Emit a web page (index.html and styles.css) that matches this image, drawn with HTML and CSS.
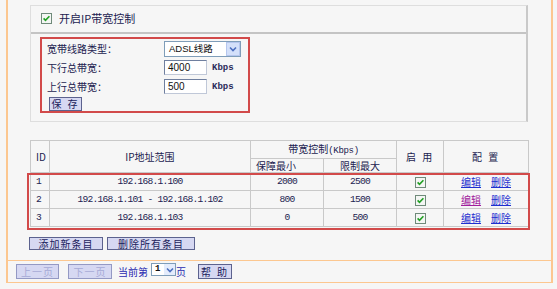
FILE: index.html
```html
<!DOCTYPE html>
<html>
<head>
<meta charset="utf-8">
<title>IP带宽控制</title>
<link rel="stylesheet" href="styles.css">
</head>
<body>
<div class="frame">
  <div class="main">
    <section class="panel">
      <div class="panel-head">
        <span class="cb"><svg width="11" height="11" viewBox="0 0 11 11"><rect x="0.5" y="0.5" width="10" height="10" fill="#f4f6f4" stroke="#6f8a7a"/><path d="M2.6 5.4 L4.5 7.4 L8.4 3.2" fill="none" stroke="#21a023" stroke-width="1.6"/></svg></span>
        <span class="title">开启IP带宽控制</span>
      </div>
      <div class="panel-body">
        <div class="settings">
          <div class="row"><span class="lbl">宽带线路类型：</span><div class="select wide"><span class="sel-text">ADSL线路</span><span class="dd"><svg width="8" height="6" viewBox="0 0 8 6"><path d="M1 1.5 L4 4.5 L7 1.5" fill="none" stroke="#4d6fc0" stroke-width="1.6"/></svg></span></div></div>
          <div class="row"><span class="lbl">下行总带宽：</span><div class="input">4000</div><span class="unit">Kbps</span></div>
          <div class="row"><span class="lbl">上行总带宽：</span><div class="input">500</div><span class="unit">Kbps</span></div>
          <button class="btn save">保&nbsp;存</button>
        </div>
      </div>
    </section>

    <div class="table-wrap">
      <table class="grid">
        <colgroup><col class="c-id"><col class="c-ip"><col class="c-min"><col class="c-max"><col class="c-en"><col class="c-cfg"></colgroup>
        <thead>
          <tr class="h1"><th rowspan="2">ID</th><th rowspan="2">IP地址范围</th><th colspan="2">带宽控制<span class="mono">(Kbps)</span></th><th rowspan="2" class="spaced">启&nbsp;用</th><th rowspan="2" class="spaced">配&nbsp;置</th></tr>
          <tr class="h2"><th>保障最小</th><th>限制最大</th></tr>
        </thead>
        <tbody>
          <tr><td class="num">1</td><td class="num">192.168.1.100</td><td class="num">2000</td><td class="num">2500</td><td><span class="cb small"><svg width="11" height="11" viewBox="0 0 11 11"><rect x="0.5" y="0.5" width="10" height="10" fill="#f4f6f4" stroke="#6f8a7a"/><path d="M2.6 5.4 L4.5 7.4 L8.4 3.2" fill="none" stroke="#21a023" stroke-width="1.6"/></svg></span></td><td><a class="lnk">编辑</a><a class="lnk">删除</a></td></tr>
          <tr><td class="num">2</td><td class="num">192.168.1.101 - 192.168.1.102</td><td class="num">800</td><td class="num">1500</td><td><span class="cb small"><svg width="11" height="11" viewBox="0 0 11 11"><rect x="0.5" y="0.5" width="10" height="10" fill="#f4f6f4" stroke="#6f8a7a"/><path d="M2.6 5.4 L4.5 7.4 L8.4 3.2" fill="none" stroke="#21a023" stroke-width="1.6"/></svg></span></td><td><a class="lnk visited">编辑</a><a class="lnk">删除</a></td></tr>
          <tr><td class="num">3</td><td class="num">192.168.1.103</td><td class="num">0</td><td class="num">500</td><td><span class="cb small"><svg width="11" height="11" viewBox="0 0 11 11"><rect x="0.5" y="0.5" width="10" height="10" fill="#f4f6f4" stroke="#6f8a7a"/><path d="M2.6 5.4 L4.5 7.4 L8.4 3.2" fill="none" stroke="#21a023" stroke-width="1.6"/></svg></span></td><td><a class="lnk">编辑</a><a class="lnk">删除</a></td></tr>
        </tbody>
      </table>
      <div class="mark"></div>
    </div>

    <div class="actions">
      <button class="btn add">添加新条目</button>
      <button class="btn delall">删除所有条目</button>
    </div>
  </div>

  <div class="nav">
    <button class="btn pg disabled">上一页</button>
    <button class="btn pg disabled">下一页</button>
    <span class="cur">当前第</span>
    <div class="select page"><span class="sel-text">1</span><span class="dd"><svg width="8" height="6" viewBox="0 0 8 6"><path d="M1 1.5 L4 4.5 L7 1.5" fill="none" stroke="#4d6fc0" stroke-width="1.6"/></svg></span></div>
    <span class="pg-unit">页</span>
    <button class="btn help">帮&nbsp;助</button>
  </div>
</div>
</body>
</html>
```

FILE: styles.css
```css
* { box-sizing: border-box; }
html, body { margin: 0; padding: 0; }
body {
  background: #f6f6f6;
  width: 557px;
  height: 289px;
  overflow: hidden;
  font-family: "Noto Sans CJK SC", sans-serif;
  font-size: 10px;
  line-height: 1;
  color: #1c1c50;
}
.frame {
  margin-left: 6px;
  width: 547px;
  height: 283px;
  border-left: 2px solid #fcc790;
  border-right: 2px solid #fcc790;
  border-bottom: 1px solid #fcc790;
  display: flex;
  flex-direction: column;
}
.main {
  flex: 1;
  padding: 5px 23px 0 22px;
}

/* top panel */
.panel {
  height: 117px;
  border: 1px solid #dedede;
  border-right: 2px solid #c9c9c9;
}
.panel-head {
  height: 28px;
  display: flex;
  align-items: center;
  padding: 0 0 2px 10px;
  gap: 7px;
  border-bottom: 2px solid #c4c4c4;
}
.cb { display: inline-flex; width: 11px; height: 11px; }
.title { font-size: 11px; }
.settings {
  margin: 3px 0 0 9px;
  width: 210px;
  height: 76px;
  border: 2px solid #d24a4a;
  padding-left: 5px;
}
.row {
  height: 19px;
  display: flex;
  align-items: center;
}
.lbl { width: 117px; }
.select {
  display: flex;
  align-items: center;
  background: #fff;
  border: 1px solid #7f9db9;
  color: #111;
}
.select.wide { width: 77px; height: 16px; }
.sel-text { flex: 1; padding-left: 4px; font-family: "Liberation Sans", "Noto Sans CJK SC", sans-serif; font-size: 9.5px; }
.dd {
  width: 14px;
  height: 100%;
  display: flex;
  align-items: center;
  justify-content: center;
  background: #d4e0fa;
  border: 1px solid #b5c6ee;
}
.input {
  width: 43px;
  height: 15px;
  background: #fff;
  border: 1px solid #6f7f9f;
  border-right-color: #c0c8d8;
  border-bottom-color: #c0c8d8;
  padding-left: 3px;
  display: flex;
  align-items: center;
  font-family: "Liberation Sans", sans-serif;
  font-size: 10px;
  color: #111;
}
.unit {
  margin-left: 5px;
  font-family: "Liberation Mono", monospace;
  font-size: 9px;
  font-weight: bold;
  color: #2a2a5a;
  padding-top: 2px;
}
.btn {
  font-family: "Noto Sans CJK SC", sans-serif;
  font-size: 10px;
  line-height: 1;
  letter-spacing: 1px;
  color: #1c1c5c;
  background: #d6d8f2;
  border: 1px solid #5c628e;
  padding: 0;
  margin: 0;
  display: inline-flex;
  align-items: center;
  justify-content: center;
}
.btn.save { width: 33px; height: 14px; margin: 1px 0 0 2px; letter-spacing: 2px; }

/* table */
.table-wrap { position: relative; margin-top: 18px; width: 498px; }
.grid {
  width: 498px;
  border-collapse: collapse;
  table-layout: fixed;
}
.c-id { width: 19px; }
.c-ip { width: 201px; }
.c-min { width: 73px; }
.c-max { width: 73px; }
.c-en { width: 47px; }
.c-cfg { width: 85px; }
.grid th, .grid td {
  border: 1px solid #c9c9c9;
  text-align: center;
  padding: 0;
  font-weight: normal;
  vertical-align: middle;
}
.grid th.spaced { letter-spacing: 2px; }
.grid th:first-child, .grid td:first-child { text-align: left; padding-left: 5px; }
.grid tr.h1 { height: 18px; }
.grid tr.h2 { height: 14px; }
.grid tbody tr { height: 18px; }
.mono { font-family: "Liberation Mono", monospace; font-size: 9px; letter-spacing: -0.3px; }
.grid .num { font-family: "Liberation Mono", monospace; font-size: 9.6px; letter-spacing: -0.75px; }
.grid .cb.small { vertical-align: middle; margin-top: 1px; }
.lnk {
  color: #1f2fd0;
  text-decoration: underline;
  margin: 0 5px;
}
.lnk.visited { color: #a0209c; }
.mark {
  position: absolute;
  left: -3px;
  top: 33px;
  width: 503px;
  height: 57px;
  border: 2px solid #d24a4a;
}

.actions {
  display: flex;
  gap: 4px;
  margin: 10px 0 0 -1px;
}
.btn.add { width: 74px; height: 13px; }
.btn.delall { width: 88px; height: 13px; }

/* nav */
.nav {
  height: 22px;
  border-top: 1px solid #fcc790;
  display: flex;
  align-items: flex-start;
  padding: 3px 0 0 8px;
}
.btn.pg { width: 43px; height: 15px; }
.btn.pg + .btn.pg { margin-left: 9px; width: 44px; }
.btn.disabled { color: #a6aad6; border-color: #9499c4; }
.cur { margin: 3px 0 0 6px; color: #2a2ab0; }
.select.page { width: 25px; height: 13px; margin-top: -1px; margin-left: 3px; }
.select.page .sel-text { font-family: "Liberation Mono", monospace; font-weight: bold; font-size: 9px; padding-left: 3px; }
.select.page .dd { width: 11px; border: none; background: #e4ecfc; }
.pg-unit { margin: 3px 0 0 0; color: #2a2ab0; }
.btn.help { width: 34px; height: 15px; margin-left: 12px; letter-spacing: 2px; }
```
